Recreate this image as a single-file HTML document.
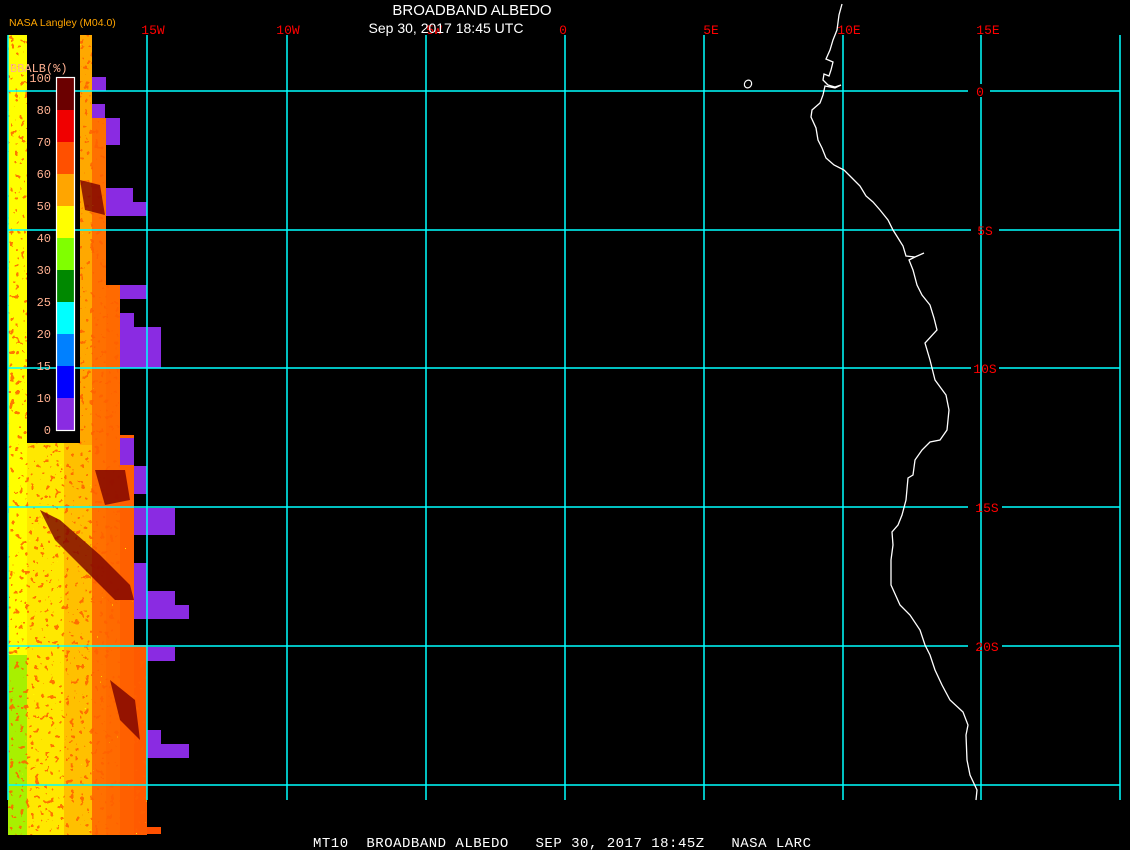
<!DOCTYPE html>
<html><head><meta charset="utf-8"><style>
html,body{margin:0;padding:0;background:#000;width:1130px;height:850px;overflow:hidden}
svg{display:block}
text{font-family:"Liberation Mono",monospace}
</style></head><body>
<svg width="1130" height="850" viewBox="0 0 1130 850" xmlns="http://www.w3.org/2000/svg">
<defs>
<filter id="nz" x="0" y="0" width="100%" height="100%">
<feTurbulence type="fractalNoise" baseFrequency="0.2" numOctaves="2" seed="4" result="t"/>
<feColorMatrix in="t" type="matrix" values="0 0 0 0 0  0 0 0 0 0  0 0 0 0 0  1 0 0 0 0" result="a"/>
<feComponentTransfer in="a" result="m"><feFuncA type="discrete" tableValues="0 0 0 0 0.85 0.85"/></feComponentTransfer>
<feFlood flood-color="#ff6000"/>
<feComposite in2="m" operator="in"/>
</filter>
<filter id="nz2" x="0" y="0" width="100%" height="100%">
<feTurbulence type="fractalNoise" baseFrequency="0.25" numOctaves="2" seed="9" result="t"/>
<feColorMatrix in="t" type="matrix" values="0 0 0 0 0  0 0 0 0 0  0 0 0 0 0  1 0 0 0 0" result="a"/>
<feComponentTransfer in="a" result="m"><feFuncA type="discrete" tableValues="0 0 0 0 0 0.9"/></feComponentTransfer>
<feFlood flood-color="#ffff00"/>
<feComposite in2="m" operator="in"/>
</filter>
<clipPath id="dc"><polygon points="8,35 92,35 92,118 106,118 106,285 120,285 120,435 134,435 134,645 147,645 147,835 8,835"/></clipPath>
</defs>
<rect width="1130" height="850" fill="#000"/>
<g clip-path="url(#dc)">
<rect x="8" y="35" width="19" height="800" fill="#ffff00"/>
<rect x="8" y="655" width="25" height="180" fill="#a8f000"/>
<rect x="27" y="443" width="37" height="392" fill="#ffe800"/>
<rect x="64" y="443" width="28" height="392" fill="#ffc000"/>
<rect x="80" y="35" width="12" height="410" fill="#ffa800"/>
<rect x="92" y="35" width="14" height="800" fill="#ff7000"/>
<rect x="106" y="35" width="14" height="800" fill="#ff6a00"/>
<rect x="120" y="35" width="14" height="800" fill="#ff6000"/>
<rect x="134" y="35" width="13" height="800" fill="#ff5a00"/>
<g filter="url(#nz)"><rect x="8" y="35" width="139" height="800" fill="#fff"/></g>
<g filter="url(#nz2)"><rect x="8" y="35" width="139" height="800" fill="#fff"/></g>
<g fill="#7a0000" opacity="0.8">
<polygon points="40,510 60,520 100,555 130,585 134,600 115,600 85,570 55,540"/>
<polygon points="80,180 100,185 105,215 85,210"/>
<polygon points="95,470 125,470 130,500 105,505"/>
<polygon points="110,680 135,700 140,740 120,720"/>
</g>
</g>
<rect x="147" y="827" width="14" height="7" fill="#ff5000"/>
<rect x="27" y="35" width="53" height="408" fill="#000"/>
<g fill="#8a2be2">
<rect x="92" y="77" width="14" height="14"/>
<rect x="92" y="104" width="13" height="14"/>
<rect x="106" y="118" width="14" height="27"/>
<rect x="106" y="188" width="27" height="14"/>
<rect x="106" y="202" width="41" height="14"/>
<rect x="120" y="285" width="27" height="14"/>
<rect x="120" y="313" width="14" height="14"/>
<rect x="120" y="327" width="41" height="41"/>
<rect x="120" y="438" width="14" height="27"/>
<rect x="134" y="466" width="13" height="28"/>
<rect x="134" y="508" width="41" height="27"/>
<rect x="134" y="563" width="13" height="28"/>
<rect x="134" y="591" width="41" height="14"/>
<rect x="134" y="605" width="55" height="14"/>
<rect x="147" y="647" width="28" height="14"/>
<rect x="147" y="730" width="14" height="14"/>
<rect x="147" y="744" width="42" height="14"/>
</g>
<g stroke="#00ffff" stroke-width="1.5">
<line x1="8" y1="35" x2="8" y2="800"/>
<line x1="147" y1="35" x2="147" y2="800"/>
<line x1="287" y1="35" x2="287" y2="800"/>
<line x1="426" y1="35" x2="426" y2="800"/>
<line x1="565" y1="35" x2="565" y2="800"/>
<line x1="704" y1="35" x2="704" y2="800"/>
<line x1="843" y1="35" x2="843" y2="800"/>
<line x1="981" y1="35" x2="981" y2="84"/><line x1="981" y1="97" x2="981" y2="800"/>
<line x1="1120" y1="35" x2="1120" y2="800"/>
<line x1="8" y1="91" x2="968" y2="91"/><line x1="990" y1="91" x2="1120" y2="91"/>
<line x1="8" y1="230" x2="971" y2="230"/><line x1="999" y1="230" x2="1120" y2="230"/>
<line x1="8" y1="368" x2="971" y2="368"/><line x1="999" y1="368" x2="1120" y2="368"/>
<line x1="8" y1="507" x2="968" y2="507"/><line x1="1002" y1="507" x2="1120" y2="507"/>
<line x1="8" y1="646" x2="968" y2="646"/><line x1="1002" y1="646" x2="1120" y2="646"/>
<line x1="8" y1="785" x2="1120" y2="785"/>
</g>
<polyline fill="none" stroke="#fff" stroke-width="1.3" points="842,4 839,15 837,30 833,40 830,50 826,59 833,62 831,70 829,76 824,74 823,80 828,85 835,87 841,85 835,88 825,86 823,95 820,103 812,110 811,117 816,128 818,140 822,148 826,158 834,165 844,170 852,178 860,186 866,196 873,202 880,210 888,220 893,230 898,238 903,246 906,256 915,257 924,253 915,257 909,260 913,270 917,285 922,295 930,305 934,318 937,330 925,343 930,360 935,380 946,395 949,410 947,430 940,440 930,442 922,450 915,460 913,475 908,478 906,500 902,515 898,525 892,532 893,545 891,560 891,585 900,605 910,615 920,630 925,645 930,655 935,670 942,685 950,700 963,712 968,725 966,735 967,760 970,775 977,790 976,800"/>
<ellipse cx="748" cy="84" rx="3.5" ry="4" transform="rotate(30 748 84)" fill="none" stroke="#fff" stroke-width="1.2"/>
<g>
<rect x="56" y="77" width="19" height="33" fill="#6b0000"/>
<rect x="56" y="110" width="19" height="32" fill="#f00000"/>
<rect x="56" y="142" width="19" height="32" fill="#ff5000"/>
<rect x="56" y="174" width="19" height="32" fill="#ffa500"/>
<rect x="56" y="206" width="19" height="32" fill="#ffff00"/>
<rect x="56" y="238" width="19" height="32" fill="#80ff00"/>
<rect x="56" y="270" width="19" height="32" fill="#008800"/>
<rect x="56" y="302" width="19" height="32" fill="#00ffff"/>
<rect x="56" y="334" width="19" height="32" fill="#0080ff"/>
<rect x="56" y="366" width="19" height="32" fill="#0000ff"/>
<rect x="56" y="398" width="19" height="32" fill="#8a2be2"/>
<rect x="56.5" y="77.5" width="18" height="353" fill="none" stroke="#fff" stroke-width="1.2"/>
</g>
<g fill="#ffb090" font-size="12" text-anchor="end">
<text x="51" y="82">100</text><text x="51" y="114">80</text><text x="51" y="146">70</text>
<text x="51" y="178">60</text><text x="51" y="210">50</text><text x="51" y="242">40</text>
<text x="51" y="274">30</text><text x="51" y="306">25</text><text x="51" y="338">20</text>
<text x="51" y="370">15</text><text x="51" y="402">10</text><text x="51" y="434">0</text>
</g>
<text x="10" y="72" fill="#ffb090" font-size="12">BBALB(%)</text>
<text x="9" y="26" fill="#ffa500" font-size="10.5" style="font-family:'Liberation Sans',sans-serif">NASA Langley (M04.0)</text>
<g fill="#ff0000" font-size="13" text-anchor="middle">
<text x="153" y="34">15W</text><text x="288" y="34">10W</text><text x="434" y="34">5W</text>
<text x="563" y="34">0</text><text x="711" y="34">5E</text><text x="849" y="34">10E</text><text x="988" y="34">15E</text>
<text x="980" y="96">0</text><text x="985" y="235">5S</text><text x="985" y="373">10S</text>
<text x="987" y="512">15S</text><text x="987" y="651">20S</text>
</g>
<text x="472" y="15" fill="#fff" font-size="15" text-anchor="middle" style="font-family:'Liberation Sans',sans-serif">BROADBAND ALBEDO</text>
<text x="446" y="33" fill="#fff" font-size="14" text-anchor="middle" style="font-family:'Liberation Sans',sans-serif">Sep 30, 2017 18:45 UTC</text>
<text x="313" y="847" fill="#fff" font-size="14" letter-spacing="0.5" xml:space="preserve">MT10  BROADBAND ALBEDO   SEP 30, 2017 18:45Z   NASA LARC</text>
</svg>
</body></html>
